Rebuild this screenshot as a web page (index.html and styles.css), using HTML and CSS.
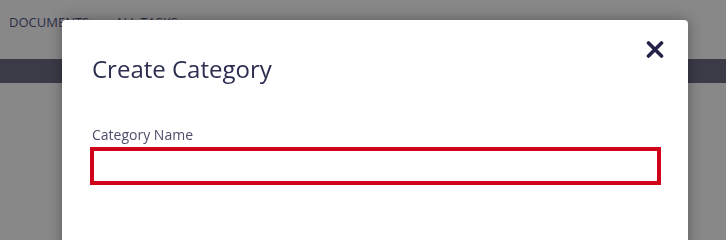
FILE: index.html
```html
<!DOCTYPE html>
<html>
<head>
<meta charset="utf-8">
<link rel="stylesheet" href="styles.css">
</head>
<body>
<div class="page">
  <nav class="nav">
    <span class="nav-item">DOCUMENTS</span>
    <span class="nav-item">ALL TASKS</span>
  </nav>
  <div class="bar"></div>
</div>
<div class="modal">
  <div class="modal-head">
    <h2 class="modal-title">Create Category</h2>
    <button class="close" aria-label="Close">
      <svg width="18" height="17" viewBox="0 0 18 17"><path d="M2.5 2 L15.5 15 M15.5 2 L2.5 15" stroke="#23234a" stroke-width="3.6" stroke-linecap="round"/></svg>
    </button>
  </div>
  <label class="field-label">Category Name</label>
  <div class="field-input"></div>
</div>
</body>
</html>
```

FILE: styles.css
```css
html, body {
  margin: 0;
  padding: 0;
  height: 100%;
  overflow: hidden;
}
body {
  background: #888888;
  font-family: "Open Sans", "Liberation Sans", sans-serif;
}
.page {
  display: flex;
  flex-direction: column;
}
.nav {
  display: flex;
  gap: 26px;
  padding: 13px 0 0 9px;
  height: 59px;
  box-sizing: border-box;
}
.nav-item {
  font-size: 13px;
  line-height: 18px;
  color: #2c2e4a;
}
.bar {
  height: 24px;
  background: #3b3b48;
}
.modal {
  position: fixed;
  left: 62px;
  top: 20px;
  bottom: -80px;
  width: 626px;
  background: #ffffff;
  border-radius: 4px 4px 0 0;
  box-shadow: 0 0 14px rgba(0, 0, 0, 0.35);
  padding: 0 28px;
  box-sizing: border-box;
}
.modal-head {
  display: flex;
  justify-content: space-between;
  align-items: flex-start;
}
.modal-title {
  margin: 33px 0 0 2px;
  font-size: 24px;
  font-weight: 400;
  line-height: 32px;
  color: #2b2d50;
}
.close {
  margin: 21px -4px 0 0;
  padding: 0;
  border: 0;
  background: none;
  width: 18px;
  height: 17px;
  display: flex;
}
.field-label {
  display: block;
  margin: 40px 0 0 2px;
  font-size: 14px;
  line-height: 19px;
  color: #4d4e6c;
}
.field-input {
  margin-top: 3px;
  width: 571px;
  height: 38px;
  border: 4px solid #d0021b;
  box-sizing: border-box;
}
```
